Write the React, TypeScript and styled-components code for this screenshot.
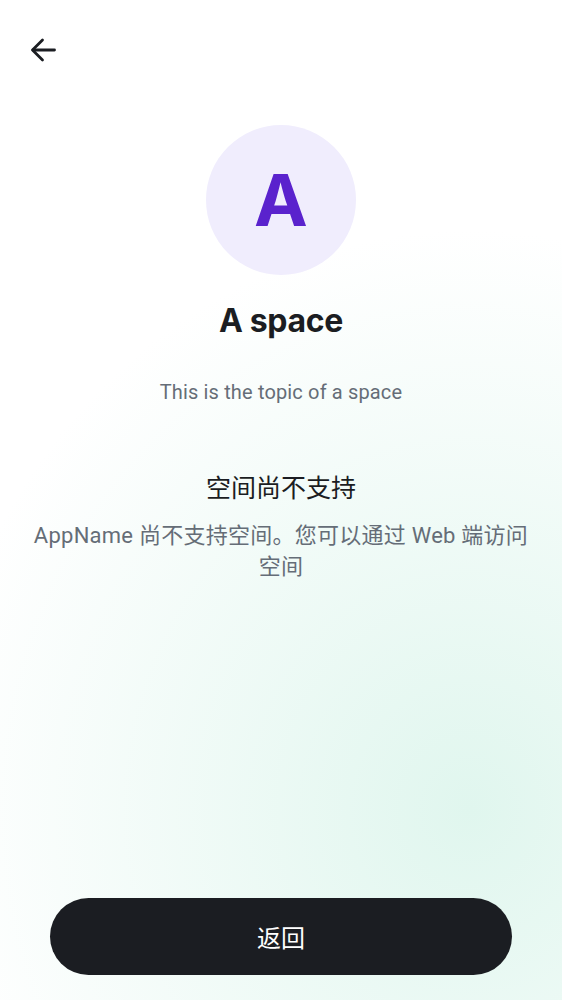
import React from "react";
import styled, { createGlobalStyle } from "styled-components";

const Global = createGlobalStyle`
  html, body { margin: 0; padding: 0; }
  body { font-family: Roboto, "Noto Sans CJK SC", sans-serif; }
  #root { min-height: 1000px; }
`;

const Page = styled.div`
  width: 562px;
  height: 1000px;
  box-sizing: border-box;
  display: flex;
  flex-direction: column;
  background:
    radial-gradient(ellipse 540px 580px at 470px 810px, #e0f6ee 0%, rgba(224,246,238,0.55) 45%, rgba(255,255,255,0) 100%),
    #ffffff;
  overflow: hidden;
`;

const TopBar = styled.div`
  height: 100px;
  display: flex;
  align-items: flex-start;
  padding: 26px 0 0 19px;
  box-sizing: border-box;
`;

const BackButton = styled.button`
  width: 48px;
  height: 48px;
  border: none;
  background: transparent;
  padding: 0;
  display: flex;
  align-items: center;
  justify-content: center;
  color: #1b1d22;
`;

const Content = styled.div`
  display: flex;
  flex-direction: column;
  align-items: center;
  padding: 25px 28px 0;
  flex: 1;
`;

const Avatar = styled.div`
  width: 150px;
  height: 150px;
  border-radius: 50%;
  background: #f0edfd;
  color: #5a22cd;
  display: flex;
  align-items: center;
  justify-content: center;
  font-family: Inter, sans-serif;
  font-weight: 700;
  font-size: 72px;
  line-height: 1;
`;

const Title = styled.h1`
  margin: 24px 0 0;
  font-family: Inter, sans-serif;
  font-weight: 700;
  font-size: 32px;
  line-height: 44px;
  color: #1b1d22;
  letter-spacing: -0.3px;
`;

const Topic = styled.p`
  margin: 35px 0 0;
  font-size: 20px;
  line-height: 28px;
  color: #656d77;
  letter-spacing: 0.15px;
`;

const Heading = styled.h2`
  margin: 66px 0 0;
  font-weight: 400;
  font-size: 25px;
  line-height: 34px;
  color: #1b1d22;
`;

const Body = styled.p`
  margin: 14px 0 0;
  font-size: 22px;
  line-height: 31px;
  color: #656d77;
  text-align: center;
  letter-spacing: 0.25px;
`;

const Footer = styled.div`
  padding: 0 50px 25px;
  display: flex;
`;

const PrimaryButton = styled.button`
  flex: 1;
  height: 77px;
  border: none;
  border-radius: 39px;
  background: #1b1d22;
  color: #ffffff;
  font-family: Roboto, "Noto Sans CJK SC", sans-serif;
  font-size: 24px;
`;

export default function App() {
  return (
    <>
      <Global />
      <Page>
        <TopBar>
          <BackButton aria-label="back">
            <svg width="28" height="28" viewBox="0 0 28 28" fill="none" stroke="currentColor" strokeWidth="2.8" strokeLinecap="round" strokeLinejoin="round">
              <path d="M25.5 14H4" />
              <path d="M13.5 4L3.5 14L13.5 24" />
            </svg>
          </BackButton>
        </TopBar>
        <Content>
          <Avatar>A</Avatar>
          <Title>A space</Title>
          <Topic>This is the topic of a space</Topic>
          <Heading>空间尚不支持</Heading>
          <Body>AppName 尚不支持空间。您可以通过 Web 端访问空间</Body>
        </Content>
        <Footer>
          <PrimaryButton>返回</PrimaryButton>
        </Footer>
      </Page>
    </>
  );
}
